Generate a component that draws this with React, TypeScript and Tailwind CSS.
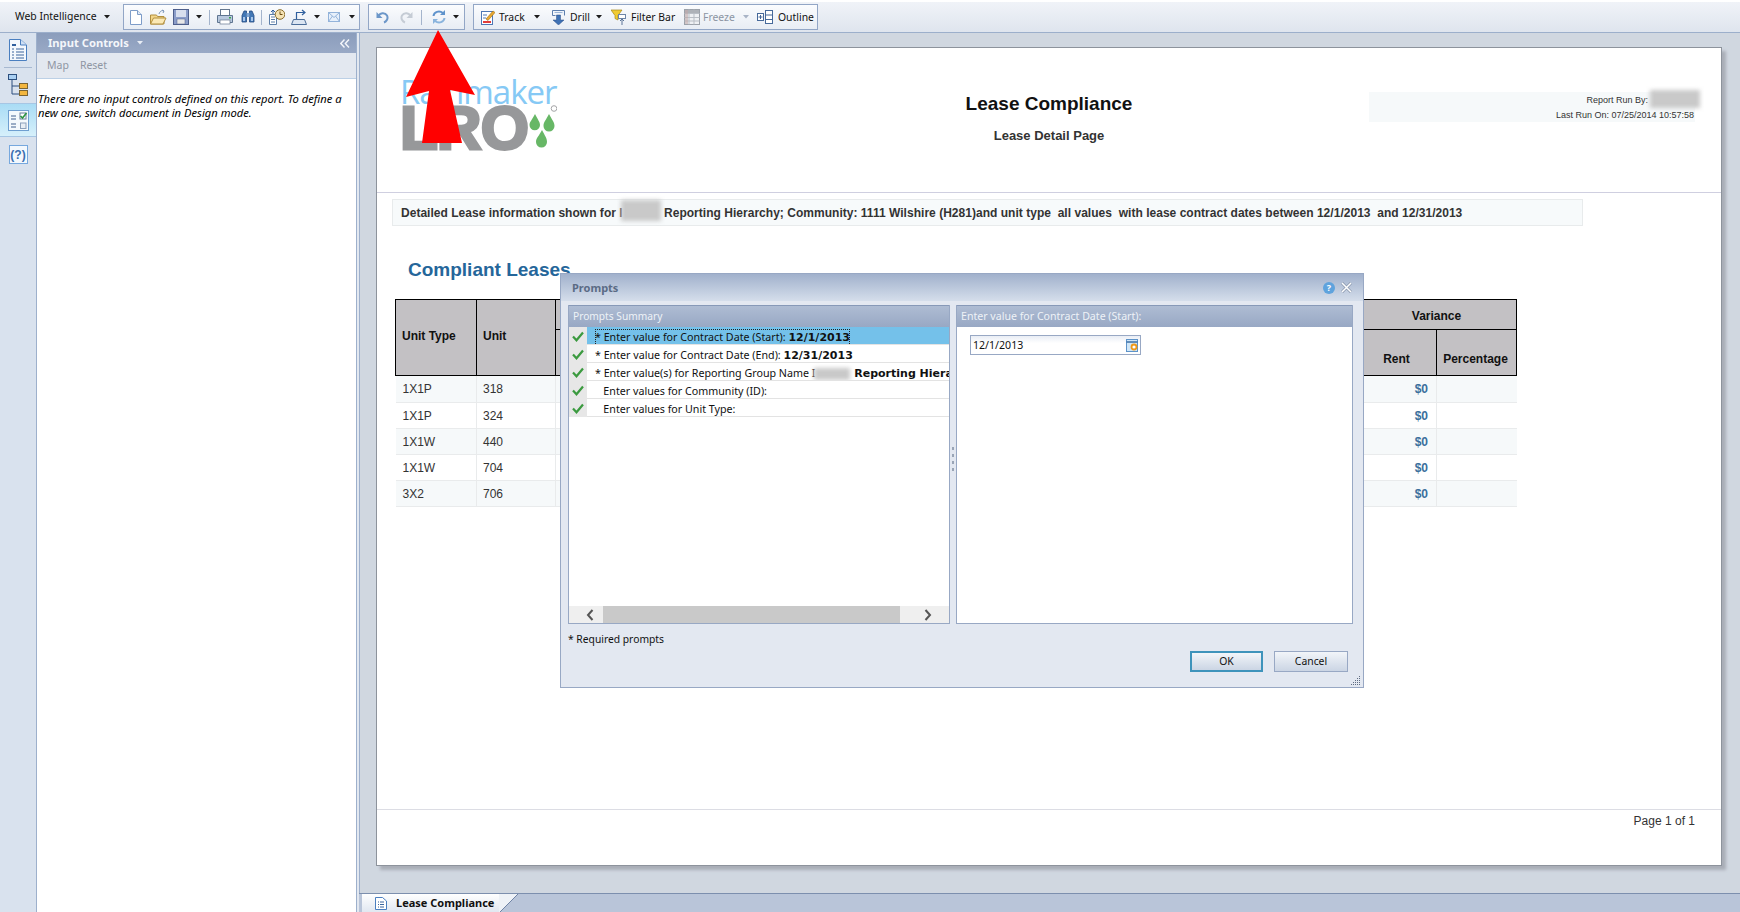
import React from "react";

const Caret = ({ ml, light }: { ml: string; light?: boolean }) => (
  <svg width="6" height="4" viewBox="0 0 6 4" className={`${ml} shrink-0`}>
    <path d="M0 0h6L3 3.5z" fill={light ? "#a9b4c6" : "#1c1c1c"} />
  </svg>
);

const Sep = ({ ml }: { ml: string }) => <div className={`${ml} h-[15px] w-px shrink-0 bg-[#a4b4cc]`} />;

const Ico = ({ w, h = 16, ml, children }: { w: number; h?: number; ml: string; children: React.ReactNode }) => (
  <svg width={w} height={h} viewBox={`0 0 ${w} ${h}`} className={`${ml} shrink-0`}>
    {children}
  </svg>
);

const Bar = ({ w, ml, children, muted }: { w: string; ml: string; children: React.ReactNode; muted?: boolean }) => (
  <span className={`${w} ${ml} shrink-0 whitespace-nowrap text-[10.4px] leading-[14px] ${muted ? "text-[#8c95a3]" : "text-[#111]"}`}>{children}</span>
);

const Group = ({ children, w }: { children: React.ReactNode; w: string }) => (
  <div className={`${w} flex h-[26px] items-center border border-[#92a6c6] bg-gradient-to-b from-[#fbfcfe] to-[#e8edf4]`}>{children}</div>
);

function Toolbar() {
  return (
    <div className="flex h-[33px] shrink-0 items-center border-b border-t-2 border-b-[#9cafcb] border-t-white bg-gradient-to-b from-[#f0f3f8] to-[#dfe5ee] pl-[15px]">
      <span className="w-[87px] whitespace-nowrap text-[10.4px] text-[#111]">Web Intelligence</span>
      <Caret ml="ml-[2px]" />
      <div className="ml-[13px]">
        <Group w="w-[237px]">
          <Ico w={12} ml="ml-[6px]"><path d="M.5 1.5h7l4 4v10H.5z" fill="#fff" stroke="#7d9cc8" /><path d="M7.5 1.5v4h4" fill="#dfe9f6" stroke="#7d9cc8" /></Ico>
          <Ico w={17} ml="ml-[8px]"><path d="M.5 6h6l1 1.5H14V15H.5z" fill="#f3d68a" stroke="#b18e3d" /><path d="M.5 15 3.5 9H16l-3 6z" fill="#fbe9b5" stroke="#b18e3d" /><path d="M9 5c1-3 3-4 5-3M14 2l-2-1M14 2l-1 2" fill="none" stroke="#7a94b8" /></Ico>
          <Ico w={16} ml="ml-[6px]"><rect x=".5" y=".5" width="15" height="15" fill="#8b9dc9" stroke="#4e5f8c" /><rect x="3" y="1" width="10" height="7" fill="#d8dfee" /><rect x="4" y="10" width="8" height="5" fill="#e8e8e8" stroke="#4e5f8c" strokeWidth=".5" /></Ico>
          <Caret ml="ml-[7px]" />
          <Sep ml="ml-[7px]" />
          <Ico w={16} ml="ml-[7px]"><rect x="3.5" y=".5" width="9" height="6" fill="#fff" stroke="#65778f" /><path d="M.5 6.5h15v7H.5z" fill="#b9c9df" stroke="#5f7590" /><rect x="3" y="11" width="10" height="4" fill="#fff" stroke="#65778f" strokeWidth=".7" /><rect x="12" y="8" width="2" height="1.5" fill="#3aa648" /></Ico>
          <Ico w={14} ml="ml-[8px]"><path d="M1 6.5 3 2h2.5v11H1zM8.5 2H11l2 4.500V13H8.500z" fill="#4277b5" stroke="#244a80" strokeWidth=".8" /><rect x="5.500" y="4" width="3" height="4" fill="#7fa7d6" /><rect x="2" y="8" width="2" height="4" fill="#a8c6ea" /><rect x="10" y="8" width="2" height="4" fill="#a8c6ea" /></Ico>
          <Sep ml="ml-[6px]" />
          <Ico w={16} ml="ml-[7px]"><path d="M.5 5.500h7v10h-7z" fill="#fff" stroke="#5c7ea8" /><path d="M2 8h4M2 10.500h4M2 13h4" stroke="#5c7ea8" /><circle cx="11" cy="5.500" r="4.800" fill="#f5e3b5" stroke="#8a6d2b" /><path d="M11 2.500v3h2.500" fill="none" stroke="#6b4d12" /><path d="M4 5V1M2 3l2-2 2 2" fill="none" stroke="#2f5f9e" /></Ico>
          <Ico w={16} ml="ml-[6px]"><path d="M.5 15.500 2.500 10.500H13.500l2 5z" fill="#dbe5f2" stroke="#4b6d99" /><path d="M5.500 10V3.500h8M11 1l3 2.500L11 6" fill="none" stroke="#2f5f9e" strokeWidth="1.200" /></Ico>
          <Caret ml="ml-[7px]" />
          <Ico w={12} ml="ml-[8px]"><rect x=".5" y="3.500" width="11" height="9" fill="#e7f0fb" stroke="#93b3da" /><path d="M.5 3.500 6 8.500l5.500-5M.5 12.500 4.500 7M11.500 12.500 7.500 7" fill="none" stroke="#93b3da" /></Ico>
          <Caret ml="ml-[9px]" />
        </Group>
      </div>
      <div className="ml-[8px]">
        <Group w="w-[97px]">
          <Ico w={13} ml="ml-[7px]"><path d="M2.500 7.500C3.500 3.500 9 3 11 6.500c1.500 3-.5 6-3 7" fill="none" stroke="#6c97c9" strokeWidth="2" /><path d="M.5 3v6h6z" fill="#6c97c9" /></Ico>
          <Ico w={13} ml="ml-[11px]"><path d="M10.500 7.500C9.500 3.500 4 3 2 6.500c-1.500 3 .5 6 3 7" fill="none" stroke="#c5ccd5" strokeWidth="2" /><path d="M12.500 3v6h-6z" fill="#c5ccd5" /></Ico>
          <Sep ml="ml-[8px]" />
          <Ico w={14} ml="ml-[10px]"><path d="M1.500 7C2 3 7 1 11 4" fill="none" stroke="#5f93cc" strokeWidth="2" /><path d="M13 1v5H8z" fill="#5f93cc" /><path d="M12.500 9C12 13 7 15 3 12" fill="none" stroke="#8ab4dd" strokeWidth="2" /><path d="M1 15v-5h5z" fill="#8ab4dd" /></Ico>
          <Caret ml="ml-[7px]" />
        </Group>
      </div>
      <div className="ml-[8px]">
        <Group w="w-[345px]">
          <Ico w={14} ml="ml-[7px]"><rect x=".5" y="2.500" width="11" height="13" fill="#fff" stroke="#4f78b5" /><path d="M2 6h4M2 9h3" stroke="#4f78b5" /><rect x="2" y="12" width="8" height="2" fill="#e23b3b" /><path d="m5 10 7-8 2 1.500-7 8z" fill="#e9a830" stroke="#9a6b12" strokeWidth=".6" /></Ico>
          <Bar ml="ml-[4px]" w="w-[27px]">Track</Bar>
          <Caret ml="ml-[8px]" />
          <Ico w={13} ml="ml-[12px]"><path d="M.5 1.500h12v5" fill="#eef3fa" stroke="#5d7fae" /><path d="M.5 1.500v5h3" fill="none" stroke="#5d7fae" /><path d="M2.500 3.500h8" stroke="#9db5d6" /><path d="M4.500 6h4v5H12l-5.500 5L1 11h3.500z" fill="#3f72b5" stroke="#2a4f86" strokeWidth=".5" /></Ico>
          <Bar ml="ml-[5px]" w="w-[19px]">Drill</Bar>
          <Caret ml="ml-[7px]" />
          <Ico w={15} ml="ml-[9px]"><path d="M0 1h11L7 6.500V11L4 9.500v-3z" fill="#f1cb32" stroke="#a5861a" strokeWidth=".7" /><rect x="7.500" y="5.500" width="7" height="4" fill="#fff" stroke="#6d85a8" /><path d="M11 16v-6M9 12l2-2 2 2" fill="none" stroke="#5a7396" /></Ico>
          <Bar ml="ml-[5px]" w="w-[44px]">Filter Bar</Bar>
          <Ico w={16} ml="ml-[9px]"><rect x=".5" y=".5" width="15" height="15" fill="#eef0f3" stroke="#9ca2aa" /><path d="M.5 4.500h15M.5 8.500h15M.5 12h15M5 .5v15M10 .5v15" stroke="#b9bec5" /><rect x="1" y="1" width="14" height="3" fill="#aeb2b8" /><rect x="1" y="1" width="3" height="14" fill="#c0a9a9" opacity=".6" /></Ico>
          <Bar ml="ml-[3px]" w="w-[31px]" muted>Freeze</Bar>
          <Caret ml="ml-[9px]" light />
          <Ico w={16} ml="ml-[8px]"><rect x=".5" y="4.500" width="6" height="7" fill="#fff" stroke="#46699a" /><path d="M3.500 6v4M1.500 8h4" stroke="#46699a" /><rect x="8.500" y="1.500" width="7" height="13" fill="#fff" stroke="#46699a" /><path d="M8.500 6h7M8.500 10.500h7" stroke="#46699a" /></Ico>
          <Bar ml="ml-[5px]" w="w-[34px]">Outline</Bar>
        </Group>
      </div>
    </div>
  );
}

function Rail() {
  return (
    <div className="flex w-[37px] shrink-0 flex-col items-center border-r border-[#9db0cc] bg-[#d9e2ee]">
      <svg width="18" height="22" viewBox="0 0 18 22" className="mt-[6px]">
        <path d="M.5.5h11l6 5.500v15.500H.5z" fill="#f4f8fd" stroke="#4a7fc0" />
        <path d="M11.500.5V6h6" fill="#cfe0f5" stroke="#4a7fc0" />
        <path d="M3 6h4" stroke="#2f5f9e" strokeWidth="2" />
        <path d="M3 10h2M7 10h8M3 13h2M7 13h8M3 16h2M7 16h8M3 19h2M7 19h8" stroke="#3a659c" />
      </svg>
      <div className="mt-[6px] h-px w-[28px] bg-[#a7b8d0]" />
      <svg width="20" height="22" viewBox="0 0 20 22" className="mt-[6px]">
        <rect x=".5" y=".5" width="8" height="5" fill="#a9cff2" stroke="#2c4f7e" />
        <path d="M4 6v14h7M4 12h7" fill="none" stroke="#2c4f7e" />
        <rect x="11.500" y="9.500" width="8" height="5" fill="#f3b63e" stroke="#7b6534" />
        <rect x="11.500" y="16.500" width="8" height="5" fill="#f3b63e" stroke="#7b6534" />
      </svg>
      <div className="mt-[7px] flex h-[34px] w-[36px] items-center justify-center border-y border-[#a6c6e4] bg-gradient-to-b from-[#a9dcf5] to-[#d6f0fb]">
        <svg width="21" height="21" viewBox="0 0 21 21">
          <rect x=".5" y=".5" width="20" height="20" fill="#f4f9fd" stroke="#6f9fd0" />
          <path d="M3 6h5M3 9h5M3 14h5M3 17h5" stroke="#41618f" />
          <rect x="12" y="3" width="6" height="6" fill="#fff" stroke="#6a7f99" />
          <path d="m12.500 6 2 2 4-5" fill="none" stroke="#2c9440" strokeWidth="1.600" />
          <rect x="12.500" y="13" width="5.500" height="5.500" fill="#e7edf4" stroke="#8ba0bb" />
        </svg>
      </div>
      <div className="mt-[8px] flex h-[19px] w-[19px] items-center justify-center border border-[#76a8de] bg-[#f3f8fd] font-['Liberation_Sans',sans-serif] text-[12px] font-bold text-[#3b6fb0]">
        (?)
      </div>
    </div>
  );
}

function InputControls() {
  return (
    <div className="flex w-[320px] shrink-0 flex-col border-r border-[#9db0cc] bg-white font-['Noto_Sans',sans-serif]">
      <div className="flex h-[20px] items-center bg-gradient-to-b from-[#8b9dbc] to-[#99a9c6] pl-[11px] pr-[4px] text-[11.2px] font-bold text-[#f4f6fa]">
        <span>Input Controls</span>
        <svg width="6" height="4" viewBox="0 0 6 4" className="ml-[8px]"><path d="M0 0h6L3 3.500z" fill="#e8edf5" /></svg>
        <svg width="10" height="9" viewBox="0 0 10 9" className="ml-auto mr-[2px]"><path d="M4.500.5.800 4.500l3.700 4M9 .5 5.300 4.500 9 8.500" fill="none" stroke="#f4f6fa" strokeWidth="1.400" /></svg>
      </div>
      <div className="flex h-[26px] items-center gap-[11px] border-b border-[#bcd0e6] bg-[#e3e8f0] pl-[10px] text-[10.5px] text-[#8f96a3]">
        <span>Map</span>
        <span>Reset</span>
      </div>
      <p className="mt-[13px] pl-px text-[11.2px] italic leading-[14px] text-black">
        There are no input controls defined on this report. To define a<br />new one, switch document in Design mode.
      </p>
    </div>
  );
}

const Blur = ({ w, h, className }: { w: string; h: string; className?: string }) => (
  <span className={`${w} ${h} ${className ?? ""} inline-block bg-[#c9c9c9] blur-[2px]`} />
);

function Logo() {
  return (
    <div className="flex w-[157px] flex-col">
      <div className="h-[28px] whitespace-nowrap pt-[1px] font-['Open_Sans',sans-serif] text-[33px] font-normal leading-[28px] tracking-[-1px] text-[#86c9f5]">
        Rainmaker
      </div>
      <div className="flex h-[45px] items-start">
        <span className="whitespace-nowrap font-['Liberation_Sans',sans-serif] text-[62px] font-bold leading-[45px] tracking-[-1px] text-[#97989a] [-webkit-text-stroke:3px_#97989a]">
          LRO
        </span>
        <svg width="28" height="45" viewBox="0 0 28 45" className="ml-auto shrink-0">
          <path d="M6 9c3 6 5 8 5 11a5 5 0 0 1-10.500 0C.5 17 3 15 6 9z" fill="#67b766" />
          <path d="M20 9c3 6 5.500 8 5.500 12a5.500 5.500 0 0 1-11 0c0-4 2.500-6 5.500-12z" fill="#67b766" />
          <path d="M13 25c3 6 5 8 5 12a5.500 5.500 0 0 1-11 0c0-4 3-6 6-12z" fill="#67b766" />
          <circle cx="25" cy="3.500" r="2.800" fill="none" stroke="#a4a5a7" />
        </svg>
      </div>
    </div>
  );
}

const rows = [
  ["1X1P", "318"],
  ["1X1P", "324"],
  ["1X1W", "440"],
  ["1X1W", "704"],
  ["3X2", "706"],
];

function LeaseTable() {
  const th = "border border-black bg-[#c3c1c4] text-[12px] font-bold text-[#111]";
  return (
    <table className="ml-[18px] mt-[15px] w-[1121px] table-fixed border-collapse font-['Liberation_Sans',sans-serif]">
      <colgroup>
        <col className="w-[81px]" />
        <col className="w-[79px]" />
        <col className="w-[801px]" />
        <col className="w-[80px]" />
        <col className="w-[80px]" />
      </colgroup>
      <thead>
        <tr className="h-[30px]">
          <th rowSpan={2} className={`${th} pb-[4px] pl-[6px] text-left`}>Unit Type</th>
          <th rowSpan={2} className={`${th} pb-[4px] pl-[6px] text-left`}>Unit</th>
          <th className={th} />
          <th colSpan={2} className={`${th} pt-[2px] text-center`}>Variance</th>
        </tr>
        <tr className="h-[46px]">
          <th className={th} />
          <th className={`${th} pt-[12px] text-center`}>Rent</th>
          <th className={`${th} pt-[12px] pr-[2px] text-center`}>Percentage</th>
        </tr>
      </thead>
      <tbody>
        {rows.map(([type, unit], i) => (
          <tr key={i} className={`${i === 0 ? "h-[27px]" : "h-[26px]"} text-[12px] text-[#333] ${i % 2 === 0 ? "bg-[#f6f9fa]" : "bg-white"}`}>
            <td className="border-b border-r border-[#e9ebec] pl-[7px]">{type}</td>
            <td className="border-b border-r border-[#e9ebec] pl-[6px]">{unit}</td>
            <td className="border-b border-r border-[#e9ebec]" />
            <td className="border-b border-r border-[#e9ebec] pr-[8px] text-right font-bold text-[#3a6f9c]">$0</td>
            <td className="border-b border-[#e9ebec]" />
          </tr>
        ))}
      </tbody>
    </table>
  );
}

function ReportPage() {
  return (
    <div className="flex h-[819px] w-[1346px] flex-col border border-[#8d939c] bg-white font-['Liberation_Sans',sans-serif] shadow-[4px_4px_3px_#a9aeb7]">
      <div className="grid h-[145px] shrink-0 grid-cols-[1fr_auto_1fr] border-b border-[#cfcfe0]">
        <div className="pl-[23px] pt-[29px]">
          <Logo />
        </div>
        <div className="flex flex-col items-center pt-[42px]">
          <div className="text-[19px] font-bold leading-[28px] text-[#111]">Lease Compliance</div>
          <div className="mt-[10px] text-[13px] font-bold leading-[16px] text-[#333]">Lease Detail Page</div>
        </div>
        <div className="flex justify-end pr-[26px] pt-[44px]">
          <div className="flex h-[30px] w-[326px] flex-col items-end bg-[#f6f9fa] pr-[1px] pt-[1px] text-[9px] leading-[15px] text-[#333]">
            <div className="flex items-center">
              <span className="mr-[2px]">Report Run By:</span>
              <Blur w="w-[50px]" h="h-[18px]" className="-mr-[6px] -mt-[3px]" />
            </div>
            <div>Last Run On: 07/25/2014 10:57:58</div>
          </div>
        </div>
      </div>
      <div className="ml-[15px] mt-[6px] flex h-[27px] w-[1191px] shrink-0 items-center border border-[#e8ebec] bg-[#f7fafb] pl-[8px] text-[12px] font-bold tracking-[0.025px] text-[#333]">
        <span className="whitespace-pre">Detailed Lease information shown for l</span>
        <Blur w="w-[40px]" h="h-[21px]" className="-ml-[2px] -mt-[5px]" />
        <span className="whitespace-pre"> Reporting Hierarchy; Community: 1111 Wilshire (H281)and unit type  all values  with lease contract dates between 12/1/2013  and 12/31/2013</span>
      </div>
      <div className="ml-[31px] mt-[30px] text-[19px] font-bold leading-[28px] text-[#25669a]">Compliant Leases</div>
      <LeaseTable />
      <div className="mt-auto flex h-[56px] shrink-0 justify-end border-t border-[#dcdde4] pr-[26px] pt-[4px] text-[12px] leading-[14px] text-[#333]">
        Page 1 of 1
      </div>
    </div>
  );
}

const Check = () => (
  <svg width="12" height="11" viewBox="0 0 12 11">
    <path d="m1 5.500 3.500 3.800L11 1.500" fill="none" stroke="#3b9a3f" strokeWidth="2.200" />
  </svg>
);

function PromptRow({ sel, star, children }: { sel?: boolean; star?: boolean; children: React.ReactNode }) {
  return (
    <div className="flex h-[18px] shrink-0">
      <div className="flex w-[18px] shrink-0 items-center justify-center bg-[#e7e7e7]"><Check /></div>
      <div className={`flex min-w-0 flex-1 items-center overflow-hidden whitespace-nowrap border-b border-[#e3e3e3] pl-[8px] pt-[4px] text-[10.7px] text-[#111] ${sel ? "bg-[#74c1ea]" : "bg-white"}`}>
        <span className={`whitespace-pre ${sel ? "outline-1 -outline-offset-1 outline-dotted outline-[#222]" : ""}`}>
          {star ? "* " : "   "}
          {children}
        </span>
      </div>
    </div>
  );
}

const Val = ({ children }: { children: React.ReactNode }) => <b className="font-['DejaVu_Sans',sans-serif] text-[11px] font-bold">{children}</b>;

const PanelHead = ({ children, size }: { children: React.ReactNode; size: string }) => (
  <div className={`${size} flex h-[22px] shrink-0 items-center border-t border-[#8799b8] bg-gradient-to-b from-[#aebcd3] to-[#98a8c4] pl-[4px] text-[#eef2f7]`}>
    {children}
  </div>
);

function Dialog() {
  return (
    <div className="absolute left-[560px] top-[273px] flex h-[415px] w-[804px] flex-col border border-[#98a8c4] bg-[#e3e8f1] font-['Noto_Sans',sans-serif]">
      <div className="flex h-[27px] shrink-0 items-center bg-gradient-to-b from-[#a1b1cc] to-[#d5deeb] pl-[11px] pr-[11px] text-[11px] font-bold text-[#5b6b85]">
        <span className="pt-[2px]">Prompts</span>
        <span className="ml-auto flex h-[12px] w-[12px] items-center justify-center rounded-full bg-[#5fa3dd] text-[9px] font-bold text-white">?</span>
        <svg width="11" height="11" viewBox="0 0 11 11" className="ml-[6px]"><path d="m1 1 9 9M10 1l-9 9" stroke="#8a97ad" strokeWidth="3" /><path d="m1 1 9 9M10 1l-9 9" stroke="#fff" strokeWidth="1.500" /></svg>
      </div>
      <div className="ml-[7px] mt-[4px] flex h-[319px] shrink-0">
        <div className="flex w-[382px] flex-col border-x border-b border-[#98a8c4] bg-white">
          <PanelHead size="text-[10.2px]">Prompts Summary</PanelHead>
          <PromptRow sel star>Enter value for Contract Date (Start): <Val>12/1/2013</Val></PromptRow>
          <PromptRow star>Enter value for Contract Date (End): <Val>12/31/2013</Val></PromptRow>
          <PromptRow star>
            Enter value(s) for Reporting Group Name I
            <Blur w="w-[36px]" h="h-[12px]" className="-ml-[1px] align-middle" />
            <Val> Reporting Hierarchy</Val>
          </PromptRow>
          <PromptRow>Enter values for Community (ID):</PromptRow>
          <PromptRow>Enter values for Unit Type:</PromptRow>
          <div className="mt-auto flex h-[17px] shrink-0 items-center bg-[#efefef]">
            <svg width="8" height="12" viewBox="0 0 8 12" className="ml-[17px]"><path d="M6.500 1 2 6l4.500 5" fill="none" stroke="#555" strokeWidth="2" /></svg>
            <div className="ml-[9px] h-full w-[297px] bg-[#c9c9c9]" />
            <svg width="8" height="12" viewBox="0 0 8 12" className="ml-[24px]"><path d="M1.500 1 6 6l-4.500 5" fill="none" stroke="#555" strokeWidth="2" /></svg>
          </div>
        </div>
        <div className="flex w-[6px] shrink-0 flex-col items-center justify-center gap-[4px] pb-[12px]">
          <div className="h-[3px] w-[2px] bg-[#9aa5b6]" />
          <div className="h-[3px] w-[2px] bg-[#9aa5b6]" />
          <div className="h-[3px] w-[2px] bg-[#9aa5b6]" />
          <div className="h-[3px] w-[2px] bg-[#9aa5b6]" />
        </div>
        <div className="flex w-[397px] flex-col border-x border-b border-[#98a8c4] bg-white">
          <PanelHead size="text-[10.6px]">Enter value for Contract Date (Start):</PanelHead>
          <div className="ml-[13px] mt-[8px] flex h-[20px] w-[171px] items-center border border-[#98a8c4] bg-gradient-to-b from-[#e9edf5] to-white to-40% pl-[2px] pr-[2px] text-[10.6px] text-[#111]">
            <span className="pt-[2px]">12/1/2013</span>
            <svg width="12" height="13" viewBox="0 0 12 13" className="ml-auto">
              <rect x=".5" y=".5" width="11" height="12" fill="#cfe6f8" stroke="#5d93c9" />
              <path d="M.5 3h11" stroke="#3d6fa6" strokeWidth="1.500" />
              <circle cx="8" cy="8" r="2.500" fill="#fff" stroke="#ef9a1a" strokeWidth="1.800" />
            </svg>
          </div>
        </div>
      </div>
      <div className="ml-[7px] mt-[8px] text-[10.3px] leading-[15px] text-[#111]">* Required prompts</div>
      <div className="ml-auto mr-[15px] mt-[4px] flex gap-[11px] text-[10.4px] text-[#111]">
        <button className="h-[21px] w-[73px] border-2 border-[#3e93bb] bg-gradient-to-b from-[#f2f5f9] to-[#cbd5e4]">OK</button>
        <button className="h-[21px] w-[74px] border border-[#98a8c4] bg-gradient-to-b from-[#f2f5f9] to-[#cbd5e4]">Cancel</button>
      </div>
      <svg width="11" height="11" viewBox="0 0 11 11" className="absolute bottom-[1px] right-[2px]">
        <path d="M9 1h1v1H9zM7 3h1v1H7zM9 3h1v1H9zM5 5h1v1H5zM7 5h1v1H7zM9 5h1v1H9zM3 7h1v1H3zM5 7h1v1H5zM7 7h1v1H7zM9 7h1v1H9zM1 9h1v1H1zM3 9h1v1H3zM5 9h1v1H5zM7 9h1v1H7zM9 9h1v1H9z" fill="#5f6c82" />
      </svg>
    </div>
  );
}

function Tabs() {
  return (
    <div className="flex h-[19px] shrink-0 border-t border-[#7c8fae] bg-[#b9c5d9] pl-[3px]">
      <div className="relative flex h-[19px] w-[137px] items-center bg-gradient-to-b from-white to-[#dfe6f0] pl-[13px] font-['Noto_Sans',sans-serif] text-[11px] font-bold text-[#111]">
        <svg width="12" height="13" viewBox="0 0 12 13">
          <path d="M.5.500h7l4 3.500v8.500H.5z" fill="#fff" stroke="#4a7fc0" />
          <path d="M3 5h1M5 5h4M3 7.500h1M5 7.500h4M3 10h1M5 10h4" stroke="#3a659c" />
        </svg>
        <span className="ml-[9px] whitespace-nowrap">Lease Compliance</span>
      </div>
      <svg width="20" height="19" viewBox="0 0 20 19" className="shrink-0">
        <path d="M0 0h19L0 19z" fill="#eef2f7" />
        <path d="M19 0 0 19" stroke="#6f83a5" />
      </svg>
    </div>
  );
}

export default function App() {
  return (
    <div className="relative flex h-[912px] w-[1740px] flex-col overflow-hidden bg-[#d0d7e0] font-['Noto_Sans',sans-serif]">
      <Toolbar />
      <div className="flex min-h-0 flex-1">
        <Rail />
        <InputControls />
        <div className="flex min-w-0 flex-1 flex-col border-l-2 border-[#e3e8f0]">
          <div className="flex-1 border-l border-[#9db0cc] pl-[16px] pt-[14px]">
            <ReportPage />
          </div>
          <Tabs />
        </div>
      </div>
      <Dialog />
      <svg width="70" height="114" viewBox="0 0 70 114" className="absolute left-[406px] top-[30px]">
        <path d="M32 0 69 65 44 60 56 113 16 113 23 61 0 67z" fill="#ff0000" />
      </svg>
    </div>
  );
}
